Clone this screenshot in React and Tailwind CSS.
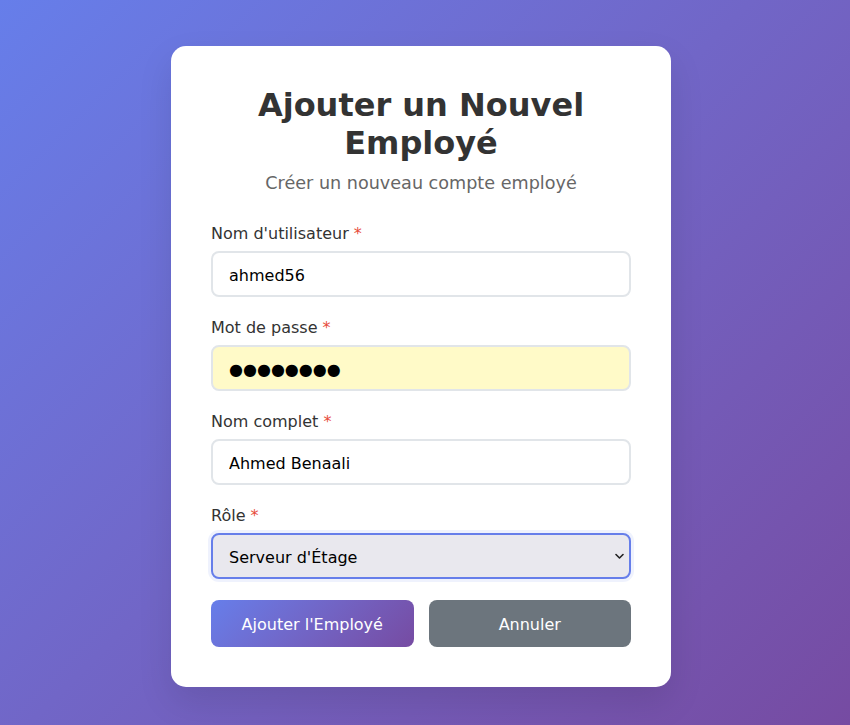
import { useState } from "react";

export default function App() {
    const [data, setData] = useState({
        username: "ahmed56",
        password: "ahmed123",
        fullName: "Ahmed Benaali",
        role: "serveur",
    });

    const update = (e) => setData({ ...data, [e.target.name]: e.target.value });

    const inputClass =
        "block w-full h-[46px] px-4 pt-[3px] rounded-lg border-2 border-[#e1e5e9] text-base text-black outline-none";

    const labelClass = "block mb-[6px] text-base leading-[22px] text-[#333]";

    return (
        <div className="min-h-screen flex justify-center pt-[46px] pr-2 bg-linear-135 from-[#667eea] to-[#764ba2] font-['DejaVu_Sans',sans-serif]">
            <div className="w-[500px] h-[641px] bg-white rounded-[15px] p-10 shadow-[0_15px_35px_rgba(0,0,0,0.1)]">
                {/* Header */}
                <div className="text-center mb-[29px]">
                    <h1 className="text-[32px] leading-[38px] font-bold text-[#333] mb-[11px]">
                        Ajouter un Nouvel Employé
                    </h1>
                    <p className="text-[17.6px] leading-[21px] text-[#666]">
                        Créer un nouveau compte employé
                    </p>
                </div>

                <form onSubmit={(e) => e.preventDefault()}>
                    {/* Username */}
                    <div className="mb-5">
                        <label className={labelClass}>
                            Nom d'utilisateur <span className="text-[#e74c3c]">*</span>
                        </label>
                        <input
                            name="username"
                            value={data.username}
                            onChange={update}
                            className={inputClass + " bg-white"}
                        />
                    </div>

                    {/* Password (masked with large discs, as in the autofilled field) */}
                    <div className="mb-5">
                        <label className={labelClass}>
                            Mot de passe <span className="text-[#e74c3c]">*</span>
                        </label>
                        <input
                            name="password"
                            readOnly
                            value={"●".repeat(data.password.length)}
                            className={inputClass + " bg-[#fffac8]"}
                        />
                    </div>

                    {/* Full name */}
                    <div className="mb-5">
                        <label className={labelClass}>
                            Nom complet <span className="text-[#e74c3c]">*</span>
                        </label>
                        <input
                            name="fullName"
                            value={data.fullName}
                            onChange={update}
                            className={inputClass + " bg-white"}
                        />
                    </div>

                    {/* Role */}
                    <div className="mb-[21px]">
                        <label className={labelClass}>
                            Rôle <span className="text-[#e74c3c]">*</span>
                        </label>
                        <div className="relative">
                            <select
                                name="role"
                                value={data.role}
                                onChange={update}
                                className="block w-full h-[46px] px-4 pt-[3px] rounded-lg border-2 border-[#667eea] bg-[#e9e8ee] text-base text-black outline-none appearance-none ring-[3px] ring-[#667eea]/10"
                            >
                                <option value="serveur">Serveur d'Étage</option>
                                <option value="reception">Réceptionniste</option>
                                <option value="manager">Manager</option>
                            </select>
                            <svg
                                className="absolute right-[7px] top-[20px] pointer-events-none"
                                width="9"
                                height="7"
                                viewBox="0 0 9 7"
                                fill="none"
                            >
                                <path d="M1 1.5 L4.5 5 L8 1.5" stroke="#222" strokeWidth="1.6" strokeLinecap="round" strokeLinejoin="round" />
                            </svg>
                        </div>
                    </div>

                    {/* Actions */}
                    <div className="flex gap-[15px]">
                        <button
                            type="submit"
                            className="flex-1 h-[47px] pt-[2px] rounded-lg bg-linear-135 from-[#667eea] to-[#764ba2] text-white text-base"
                        >
                            Ajouter l'Employé
                        </button>
                        <button
                            type="button"
                            className="flex-1 h-[47px] pt-[2px] rounded-lg bg-[#6c757d] text-white text-base"
                        >
                            Annuler
                        </button>
                    </div>
                </form>
            </div>
        </div>
    );
}
